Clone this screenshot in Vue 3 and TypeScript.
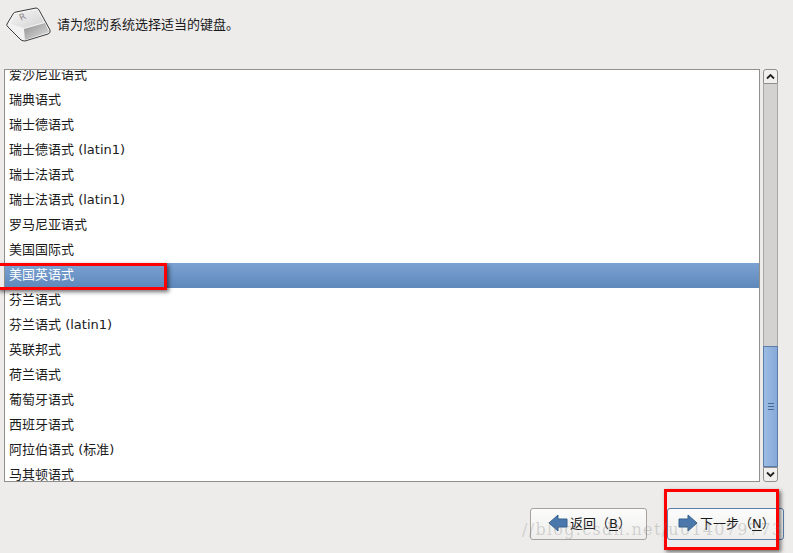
<script setup lang="ts">
const rows = [
  '爱沙尼亚语式', '瑞典语式', '瑞士德语式', '瑞士德语式 (latin1)', '瑞士法语式',
  '瑞士法语式 (latin1)', '罗马尼亚语式', '美国国际式', '美国英语式', '芬兰语式',
  '芬兰语式 (latin1)', '英联邦式', '荷兰语式', '葡萄牙语式', '西班牙语式',
  '阿拉伯语式 (标准)', '马其顿语式'
]
const selected = '美国英语式'
</script>

<template>
  <div class="page">
    <header class="head">
      <svg class="key" width="52" height="44" viewBox="0 0 52 44">
        <defs>
          <linearGradient id="keyTop" x1="0" y1="0" x2="1" y2="1">
            <stop offset="0" stop-color="#f6f6f6" />
            <stop offset="1" stop-color="#d2d2d2" />
          </linearGradient>
          <linearGradient id="keyFront" x1="0" y1="0" x2="1" y2="1">
            <stop offset="0" stop-color="#8f8f8f" />
            <stop offset="1" stop-color="#e2e2e2" />
          </linearGradient>
        </defs>
        <path d="M6 24 L12 14 Q13 12 15 12 L35 8 Q37 8 38 10 L49 30 Q50 33 47 34 L24 41 Q22 41 20 40 L7 27 Q5 25 6 24 Z" fill="#f2f2f2" stroke="#3c3c3c" stroke-width="1" />
        <path d="M23 29 L44 23 L48 32 L24 40 Z" fill="url(#keyFront)" />
        <path d="M10 24 L14 14 L36 10 L43 22 L23 28 Z" fill="url(#keyTop)" />
        <text x="20" y="21" class="key-letter" transform="rotate(-25 20 21)">R</text>
      </svg>
      <span class="title">请为您的系统选择适当的键盘。</span>
    </header>

    <main class="body">
      <div class="list">
        <div class="list-inner">
          <div
            v-for="row in rows"
            :key="row"
            class="row"
            :class="{ selected: row === selected }"
          >{{ row }}</div>
        </div>
      </div>
      <div class="scrollbar">
        <div class="step up">
          <svg width="11" height="7" viewBox="0 0 11 7"><path d="M2 5.5 L5.5 2 L9 5.5" fill="none" stroke="#222" stroke-width="1.8" /></svg>
        </div>
        <div class="track">
          <div class="thumb"><i /><i /><i /></div>
        </div>
        <div class="step down">
          <svg width="11" height="7" viewBox="0 0 11 7"><path d="M2 1.5 L5.5 5 L9 1.5" fill="none" stroke="#222" stroke-width="1.8" /></svg>
        </div>
      </div>
    </main>

    <footer class="foot">
      <button class="btn back" type="button">
        <svg width="20" height="18" viewBox="0 0 20 18"><path d="M1 9 L10 1 L10 5 L19 5 L19 13 L10 13 L10 17 Z" fill="#4a78ad" stroke="#35608f" /></svg>
        <span>返回（<u>B</u>）</span>
      </button>
      <button class="btn next" type="button">
        <svg width="20" height="18" viewBox="0 0 20 18"><path d="M19 9 L10 1 L10 5 L1 5 L1 13 L10 13 L10 17 Z" fill="#4a78ad" stroke="#35608f" /></svg>
        <span>下一步（<u>N</u>）</span>
      </button>
    </footer>

    <div class="mark mark-row"></div>
    <div class="mark mark-next"></div>
    <div class="watermark">//blog.csdn.net/u014079773</div>
  </div>
</template>

<style>
html, body { margin: 0; background: #edeceb; }
</style>

<style scoped>
.page {
  position: relative;
  width: 793px; height: 553px; overflow: hidden;
  display: flex; flex-direction: column;
  background: #edeceb; color: #1a1a1a;
  font-family: "DejaVu Sans", "Noto Sans CJK SC", sans-serif; font-size: 13px;
}
.head {
  height: 69px; box-sizing: border-box; flex: none;
  display: flex; align-items: flex-start; gap: 4px;
  padding: 0 0 0 1px;
}
.key { flex: none; }
.key-letter { font: 9px "DejaVu Sans", sans-serif; fill: #8a8a8a; }
.title { margin-top: 16px; line-height: 18px; }
.body {
  height: 413px; flex: none;
  display: flex; gap: 3px;
  padding-left: 4px;
}
.list {
  width: 756px; box-sizing: border-box;
  border: 1px solid #8f8f8c; background: #fff; overflow: hidden;
}
.list-inner { margin-top: -7px; }
.row { height: 25px; line-height: 24px; padding-left: 4px; white-space: nowrap; }
.row.selected {
  background: linear-gradient(#7ba2d2, #5f88bb);
  color: #fff;
}
.scrollbar {
  width: 15px; display: flex; flex-direction: column;
}
.step {
  height: 15px; flex: none; box-sizing: border-box;
  display: flex; align-items: center; justify-content: center;
  background: #f1f0ef; border: 1px solid #8f8f8c;
}
.step.up { border-radius: 3px 3px 0 0; }
.step.down { border-radius: 0 0 3px 3px; }
.track {
  flex: 1; display: flex; flex-direction: column; justify-content: flex-end;
  background: #d3d2d0; border-left: 1px solid #a8a8a5; border-right: 1px solid #a8a8a5;
}
.thumb {
  height: 121px; margin: 0 -1px; flex: none; box-sizing: border-box;
  display: flex; flex-direction: column; align-items: center; justify-content: center; gap: 2px;
  background: linear-gradient(90deg, #9dbce3, #86a9d8);
  border: 1px solid #5a7ea9;
}
.thumb i { width: 6px; height: 1px; background: #466a96; display: block; }
.foot {
  flex: 1; display: flex; justify-content: flex-end; align-items: flex-start;
  gap: 20px; padding: 26px 9px 0 0;
}
.btn {
  width: 117px; height: 32px; box-sizing: border-box;
  display: flex; align-items: center; gap: 2px;
  font: inherit; color: inherit;
  background: linear-gradient(#fcfcfc, #eeedec);
  border: 1px solid #a5a29d; border-radius: 3px;
}
.back { padding: 0 0 3px 17px; }
.next { padding: 0 0 3px 10px; border-color: #5a7ea9; }
.btn u { text-underline-offset: 2px; }
.mark {
  position: absolute; box-sizing: border-box;
  border: 3px solid #f00;
  box-shadow: 2px 2px 4px rgba(0, 0, 0, 0.55);
}
.mark-row { left: -3px; top: 263px; width: 170px; height: 27px; }
.mark-next { left: 664px; top: 489px; width: 115px; height: 61px; }
.watermark {
  position: absolute; left: 522px; top: 520px;
  font: 16px "DejaVu Serif", serif; letter-spacing: 1.3px;
  color: rgba(120, 120, 120, 0.28); white-space: nowrap;
}
</style>
